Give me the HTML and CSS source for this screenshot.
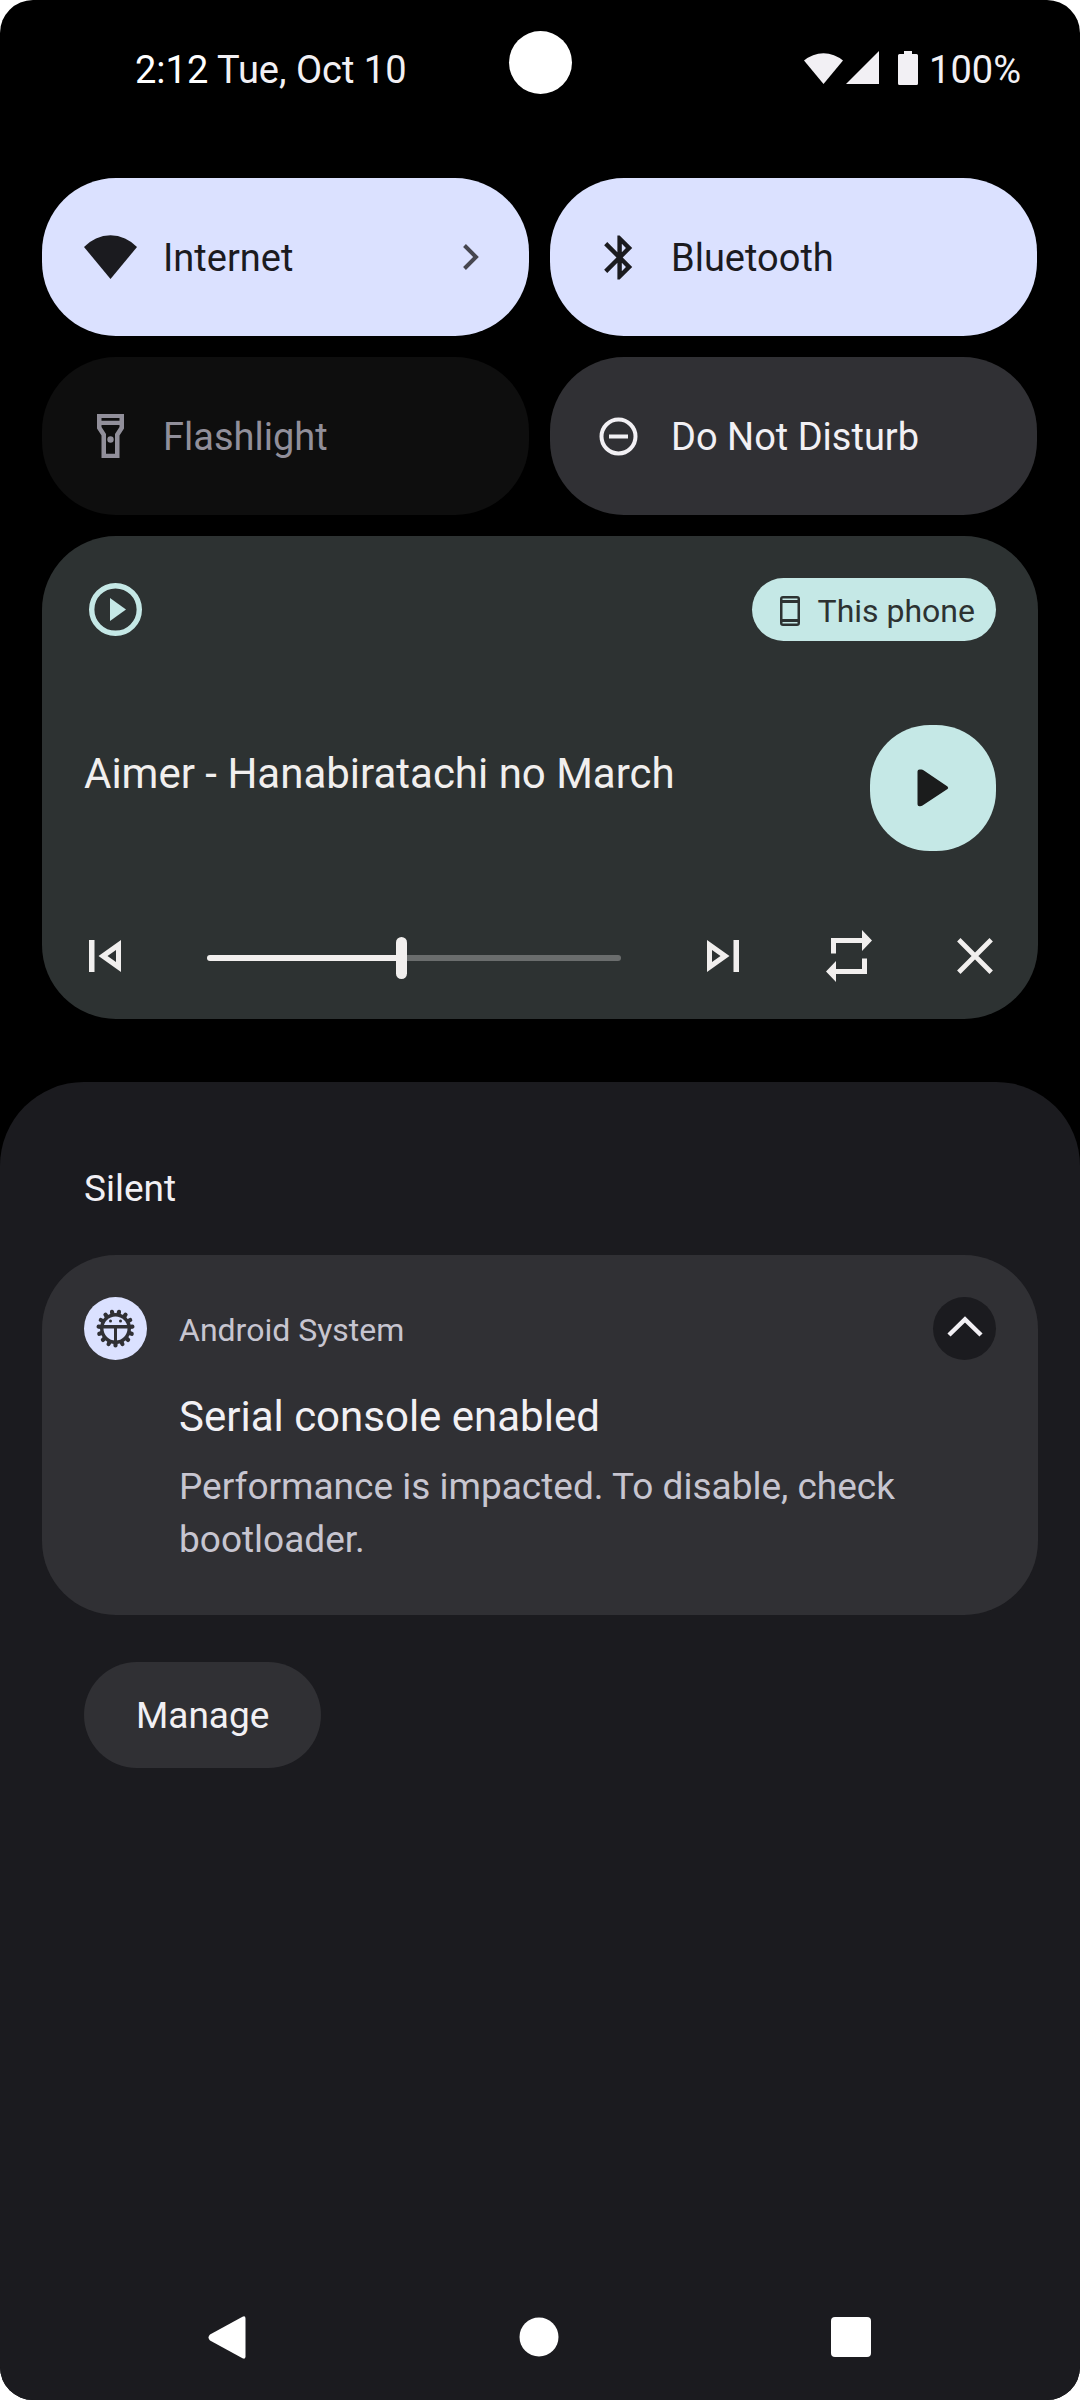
FILE: index.html
```html
<!DOCTYPE html>
<html lang="en">
<head>
  <meta charset="utf-8">
  <meta name="viewport" content="width=device-width, initial-scale=1">
  <title>Notification shade</title>
  <link rel="stylesheet" href="styles.css">
</head>
<body>
  <header class="status">
    <p class="status-clock"><time class="status-time">2:12</time> <span>Tue, Oct 10</span></p>
    <span class="camera"></span>
    <div class="status-icons">
      <svg width="40" height="34" viewBox="0 0 40 34" aria-hidden="true"><path d="M0 9.500A30 30 0 0 1 39 9.500L19.500 33z"/></svg>
      <svg class="signal" width="33" height="34" viewBox="0 0 33 34" aria-hidden="true"><path d="M33 0V33H0z"/></svg>
      <svg class="battery" width="20" height="34" viewBox="0 0 20 34" aria-hidden="true"><path d="M6 0h8v3h4.500a1.500 1.500 0 0 1 1.500 1.500v28a1.500 1.500 0 0 1-1.500 1.500h-17a1.500 1.500 0 0 1-1.500-1.500v-28a1.500 1.500 0 0 1 1.500-1.500H6z"/></svg>
      <span>100%</span>
    </div>
  </header>

  <main class="shade">
    <section class="tiles" aria-label="Quick settings">
      <button class="tile tile-on" type="button">
        <svg width="53" height="53" viewBox="0 0 53 53" aria-hidden="true"><path d="M0 16A36 36 0 0 1 53 16L26.500 48z"/></svg>
        <span class="tile-label">Internet</span>
        <svg class="chevron" width="16" height="26" viewBox="0 0 16 26" aria-hidden="true"><path d="M1.500 1.500L13 13L1.500 24.500"/></svg>
      </button>
      <button class="tile tile-on" type="button">
        <svg width="53" height="53" viewBox="-.5 0 24 24" aria-hidden="true"><path d="M17.710 7.710L12 2h-1v7.590L6.410 5 5 6.410 10.590 12 5 17.590 6.410 19 11 14.410V22h1l5.710-5.710-4.300-4.290 4.300-4.290zM13 5.830l1.880 1.880L13 9.590V5.830zm1.880 10.460L13 18.170v-3.760l1.880 1.880z"/></svg>
        <span class="tile-label">Bluetooth</span>
      </button>
      <button class="tile tile-disabled" type="button" disabled>
        <svg width="53" height="53" viewBox="0 0 53 53" aria-hidden="true"><path fill-rule="evenodd" d="M13 4H40V18.500L35.500 25.500V48H17.500V25.500L13 18.500zM17.500 8V10.800H35.500V8zM17.500 15V17L22 24V43.700H31V24L35.500 17V15z"/><circle cx="26.500" cy="29.500" r="3.200"/></svg>
        <span class="tile-label">Flashlight</span>
      </button>
      <button class="tile" type="button">
        <svg width="53" height="53" viewBox="0 0 53 53" aria-hidden="true"><circle cx="26.500" cy="26.500" r="17" fill="none" stroke="currentColor" stroke-width="4"/><path d="M17 24.500h19v4H17z"/></svg>
        <span class="tile-label">Do Not Disturb</span>
      </button>
    </section>

    <section class="media" aria-label="Media player">
      <div class="media-head">
        <svg class="media-app" width="53" height="53" viewBox="0 0 53 53" aria-hidden="true"><circle cx="26.500" cy="26.500" r="23.800" fill="none" stroke="currentColor" stroke-width="5.400"/><path d="M21 15L37 26.500L21 38z"/></svg>
        <button class="output" type="button">
          <svg width="20" height="30" viewBox="0 0 20 30" aria-hidden="true"><path fill-rule="evenodd" d="M3 0H17Q20 0 20 3V27Q20 30 17 30H3Q0 30 0 27V3Q0 0 3 0zM2.500 2.500V4H17.500V2.500zM2.500 7V23H17.500V7zM2.500 26V27.500H17.500V26z"/></svg>
          <span>This phone</span>
        </button>
      </div>
      <div class="media-main">
        <h2 class="media-title">Aimer - Hanabiratachi no March</h2>
        <button class="play" type="button" aria-label="Play">
          <svg width="32" height="38" viewBox="0 0 32 38" aria-hidden="true"><path d="M0.500 2.500Q0.500 .5 2.500 .5H4.500Q5.500 .5 6.500 1.300L30.500 17.500Q32 19 30.500 20L5.500 36.500Q4.500 37.300 3 37.300H2.500Q.5 37.300 .5 35.300z"/></svg>
        </button>
      </div>
      <div class="media-controls">
        <button class="control" type="button" aria-label="Previous">
          <svg width="32" height="32" viewBox="0 0 32 32" aria-hidden="true"><path fill-rule="evenodd" d="M0 0H5.500V32H0zM32 0V32L9.500 16zM27 10L18.500 16L27 22z"/></svg>
        </button>
        <input class="seek" type="range" min="0" max="100" value="47" aria-label="Position">
        <button class="control" type="button" aria-label="Next">
          <svg width="32" height="32" viewBox="0 0 32 32" aria-hidden="true"><path fill-rule="evenodd" d="M26.500 0H32V32H26.500zM0 0V32L22.500 16zM5 10L13.500 16L5 22z"/></svg>
        </button>
        <button class="control" type="button" aria-label="Repeat">
          <svg width="46" height="52" viewBox="0 0 46 52" aria-hidden="true"><path d="M5 23.500V8H36V0L46 10.500L36 21V13H10V23.500zM41 28.500V44H10V52L0 41.500L10 31V39H36V28.500z"/></svg>
        </button>
        <button class="control" type="button" aria-label="Close">
          <svg width="36" height="36" viewBox="0 0 36 36" aria-hidden="true"><path d="M1.800 1.800L34.200 34.200M34.200 1.800L1.800 34.200" stroke="currentColor" stroke-width="4.800"/></svg>
        </button>
      </div>
    </section>
  </main>

  <section class="notifications" aria-label="Notifications">
    <h2 class="section-title">Silent</h2>
    <article class="card">
      <div class="card-head">
        <svg class="card-icon" width="63" height="63" viewBox="-31.500 -31.500 63 63" aria-hidden="true">
          <circle r="31.500" fill="#dbe1ff"/>
          <path d="M0 0V17M0 0L6.900 15.500M0 0L12.600 11.400M0 0L16.200 5.300M0 0L16.900-1.800M0 0L14.700-8.500M0 0L10-13.800M0 0L3.500-16.600M0 0L-6.900 15.500M0 0L-12.600 11.400M0 0L-16.200 5.300M0 0L-16.900-1.800M0 0L-14.700-8.500M0 0L-10-13.800M0 0L-3.500-16.600" stroke="#303034" stroke-width="4.200" stroke-linecap="round"/>
          <circle r="15.500" fill="#303034"/>
          <circle r="12" fill="#dbe1ff"/>
          <path d="M-13-3.500H13V0H1.500V13H-1.500V0H-13z" fill="#303034"/>
          <circle cx="-5" cy="-7.500" r="1.500" fill="#303034"/>
          <circle cx="5" cy="-7.500" r="1.500" fill="#303034"/>
        </svg>
        <span class="card-app">Android System</span>
        <button class="collapse" type="button" aria-label="Collapse">
          <svg width="36" height="26" viewBox="0 0 36 26" aria-hidden="true"><path d="M2 19L18 3.500L34 19" fill="none" stroke="currentColor" stroke-width="4.500"/></svg>
        </button>
      </div>
      <div class="card-body">
        <h3 class="card-title">Serial console enabled</h3>
        <p class="card-text">Performance is impacted. To disable, check bootloader.</p>
      </div>
    </article>
    <button class="manage" type="button">Manage</button>

    <nav class="navbar" aria-label="System navigation">
      <button class="nav-button" type="button" aria-label="Back">
        <svg width="38" height="43" viewBox="0 0 38 43" aria-hidden="true"><path d="M34.500 .8Q37.500-.6 37.500 2.500V40.500Q37.500 43.600 34.500 42.200L2 24.500Q-1 21.500 2 18.500z"/></svg>
      </button>
      <button class="nav-button" type="button" aria-label="Home">
        <svg width="40" height="40" viewBox="0 0 40 40" aria-hidden="true"><circle cx="20" cy="20" r="19.500"/></svg>
      </button>
      <button class="nav-button" type="button" aria-label="Recents">
        <svg width="40" height="40" viewBox="0 0 40 40" aria-hidden="true"><rect width="40" height="40" rx="4"/></svg>
      </button>
    </nav>
  </section>
</body>
</html>
```
FILE: styles.css
```css
* {
  box-sizing: border-box;
}

html {
  background: #fff;
}

body {
  position: relative;
  display: flex;
  flex-direction: column;
  min-height: 100vh;
  margin: 0;
  overflow: hidden;
  border-radius: 33px;
  background: #000;
  color: #f2f0f4;
  font-family: Roboto, "Liberation Sans", sans-serif;
  font-size: 37px;
  line-height: 50px;
}

h2, h3, p {
  margin: 0;
  font-weight: 400;
}

button {
  margin: 0;
  padding: 0;
  border: 0;
  background: none;
  color: inherit;
  font: inherit;
  text-align: left;
}

svg {
  display: block;
  flex: none;
  fill: currentColor;
}

/* Status bar */
.status {
  display: flex;
  align-items: center;
  justify-content: space-between;
  height: 138px;
  padding: 2px 59px 0 135px;
  font-size: 38px;
}

.status-time {
  color: #fff;
}

.camera {
  position: absolute;
  top: 31px;
  left: 50%;
  width: 63px;
  height: 63px;
  margin-left: -31px;
  border-radius: 50%;
  background: #fff;
}

.status-icons {
  display: flex;
  align-items: center;
}

.status-icons svg {
  margin-bottom: 4px;
}

.status-icons .signal {
  margin-left: 2px;
}

.status-icons .battery {
  margin-right: 11px;
  margin-left: 19px;
}

/* Quick settings */
.shade {
  display: flex;
  flex-direction: column;
  gap: 21px;
  padding: 40px 42px 63px;
}

.tiles {
  display: grid;
  grid-template-columns: 1fr 1fr;
  gap: 21px;
  padding-right: 1px;
}

.tile {
  display: flex;
  align-items: center;
  gap: 26px;
  height: 158px;
  padding: 0 50px 0 42px;
  border-radius: 74px;
  background: #303034;
  font-size: 38px;
}

.tile-on {
  background: #dbe1ff;
  color: #1b1b1f;
}

.tile-disabled {
  background: #0e0e0e;
  color: #918f9a;
}

.tile-label {
  flex: 1;
  padding-top: 2px;
}

.chevron {
  fill: none;
  stroke: #46464f;
  stroke-width: 4;
}

/* Media player */
.media {
  border-radius: 74px;
  background: #2d3232;
  color: #f1efee;
}

.media-head {
  display: flex;
  align-items: center;
  justify-content: space-between;
  padding: 42px 42px 0 47px;
}

.media-app {
  color: #c5e8e6;
}

.output {
  display: flex;
  align-items: center;
  gap: 18px;
  height: 63px;
  padding: 2px 21px 0 28px;
  border-radius: 32px;
  background: #c5e8e6;
  color: #2d3232;
  font-size: 32px;
}

.media-main {
  display: flex;
  align-items: center;
  justify-content: space-between;
  padding: 84px 42px 42px;
}

.media-title {
  padding-bottom: 28px;
  font-size: 42px;
}

.play {
  display: flex;
  align-items: center;
  justify-content: center;
  width: 126px;
  height: 126px;
  border-radius: 60px;
  background: #c5e8e6;
  color: #1b1c1c;
}

.media-controls {
  display: flex;
  align-items: center;
}

.control {
  display: flex;
  flex: none;
  align-items: center;
  justify-content: center;
  width: 126px;
  height: 126px;
}

.seek {
  flex: 1;
  min-width: 0;
  height: 42px;
  margin: 4px 39px 0;
  background: none;
  appearance: none;
}

.seek::-webkit-slider-runnable-track {
  height: 6px;
  border-radius: 3px;
  background: linear-gradient(to right, #f1efee 47%, #6a6d6d 47%);
}

.seek::-webkit-slider-thumb {
  width: 11px;
  height: 42px;
  margin-top: -18px;
  border-radius: 6px;
  background: #f1efee;
  appearance: none;
}

/* Notifications */
.notifications {
  display: flex;
  flex: 1;
  flex-direction: column;
  align-items: flex-start;
  padding: 82px 42px 0;
  border-radius: 84px 84px 0 0;
  background: #1b1b1f;
}

.section-title {
  margin: 0 42px 41px;
  font-size: 37px;
}

.card {
  align-self: stretch;
  padding: 42px 42px 49px;
  border-radius: 74px;
  background: #303034;
}

.card-head {
  display: flex;
  align-items: center;
  gap: 32px;
}

.card-app {
  flex: 1;
  padding-top: 2px;
  color: #c7c5d0;
  font-size: 32px;
}

.collapse {
  display: flex;
  align-items: center;
  justify-content: center;
  width: 63px;
  height: 63px;
  border-radius: 50%;
  background: #1b1b1f;
}

.card-body {
  padding: 32px 95px 0;
}

.card-title {
  margin-bottom: 18px;
  font-size: 42px;
}

.card-text {
  color: #c7c5d0;
  line-height: 53px;
}

.manage {
  height: 106px;
  margin: 47px 42px;
  padding: 2px 52px 0;
  border-radius: 53px;
  background: #303034;
}

/* System navigation */
.navbar {
  display: flex;
  align-self: stretch;
  justify-content: center;
  gap: 208px;
  margin-top: auto;
  padding-right: 2px;
}

.nav-button {
  display: flex;
  align-items: center;
  justify-content: center;
  width: 104px;
  height: 126px;
  color: #fff;
}
```
